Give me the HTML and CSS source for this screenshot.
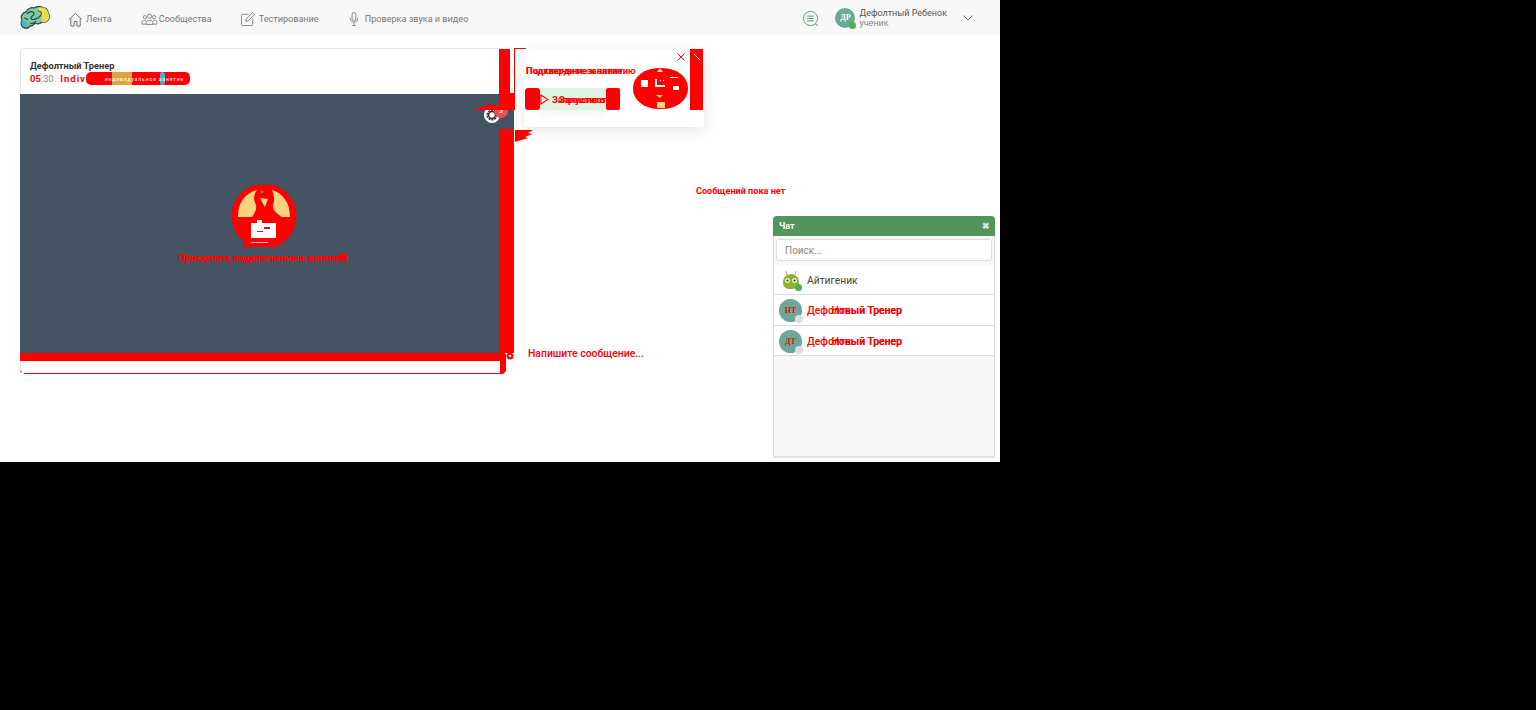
FILE: index.html
```html
<!DOCTYPE html>
<html lang="ru">
<head>
<meta charset="utf-8">
<title>Занятие</title>
<link rel="stylesheet" href="styles.css">
</head>
<body>
<div class="page">
  <header class="topbar">
    <svg class="logo" viewBox="0 0 30 23" width="30" height="23">
      <path d="M2 14C0 10 3 6 6 6c1-3 5-5 8-4 3-2 7-2 9 0 3 0 5 2 5 5 2 2 2 5 0 7-1 2-4 3-6 2-2 2-5 2-7 1-1 2-3 3-5 3l-2 2H5C2 22 0 18 2 14z" fill="#7fc9a0" stroke="#2f4a4e" stroke-width="1.300"/>
      <path d="M18 2c2-1 4-1 5 0 3 0 5 2 5 5 2 2 2 5 0 7-1 2-4 3-6 2-1-2-1-4 0-5-2-2-3-6-4-9z" fill="#eadb4e"/>
      <path d="M2 14c3 1 6 2 7 4-1 2-2 3-3 3H5C2 21 1 17 2 14z" fill="#4db5c6"/>
      <path d="M7 8c2-3 6-3 7-1s-3 3-3 5 4 2 6 0M18 5c3 0 4 2 3 4s-3 2-3 4M10 17c2 1 5 0 6-2M4 12c2 0 3 1 4 2" fill="none" stroke="#2f4a4e" stroke-width="1.200"/>
    </svg>
    <nav class="nav">
      <a class="nav-item nav-home">
        <svg viewBox="0 0 16 16" width="15" height="15"><path d="M1 8l7-6.500L15 8M3 7v8h3.500v-5h3v5H13V7" fill="none" stroke="#666" stroke-width="1"/></svg>
        Лента
      </a>
      <a class="nav-item nav-groups">
        <svg viewBox="0 0 18 14" width="17" height="13"><g fill="none" stroke="#777" stroke-width=".9"><circle cx="9" cy="3.500" r="2.200"/><circle cx="4" cy="4.500" r="1.800"/><circle cx="14" cy="4.500" r="1.800"/><path d="M5.500 12.500V9.500c0-2 7-2 7 0v3zM1 12V9.500c0-1.500 2-2 4-1.500M17 12V9.500c0-1.500-2-2-4-1.500M1 12h4.500M17 12h-4.500"/></g></svg>
        Сообщества
      </a>
      <a class="nav-item nav-test">
        <svg viewBox="0 0 15 15" width="14" height="14"><path d="M8 2.500H1.500a1 1 0 0 0-1 1v10a1 1 0 0 0 1 1h10a1 1 0 0 0 1-1V7M5 10l.5-2.500L12.500.8l2 2-7 6.700z" fill="none" stroke="#777" stroke-width=".9"/></svg>
        Тестирование
      </a>
      <a class="nav-item nav-mic">
        <svg viewBox="0 0 10 15" width="10" height="14"><g fill="none" stroke="#777" stroke-width=".9"><rect x="3" y=".5" width="4" height="9" rx="2"/><path d="M1 6.500c0 6 8 6 8 0M5 11.500v2.500M3 14.500h4"/></g></svg>
        Проверка звука и видео
      </a>
    </nav>
    <div class="top-right">
      <svg class="chat-icon" viewBox="0 0 18 18" width="17" height="17"><circle cx="9" cy="9" r="7.500" fill="none" stroke="#4f9a6a" stroke-width="1"/><path d="M5.500 6.500h7M5.500 9h7M5.500 11.500h7" stroke="#4f9a6a" stroke-width="1"/><path d="M14 15l3 1.500" stroke="#4f9a6a" stroke-width="1"/></svg>
      <div class="user-avatar">ДР<span class="online"></span></div>
      <div class="user-info">
        <div class="user-name">Дефолтный Ребенок</div>
        <div class="user-role">ученик</div>
      </div>
      <svg class="caret" viewBox="0 0 10 6" width="10" height="6"><path d="M.5.500L5 5 9.500.500" fill="none" stroke="#666" stroke-width=".9"/></svg>
    </div>
  </header>

  <main class="stage">
    <section class="lesson">
      <div class="lesson-head">
        <div class="trainer">Дефолтный Тренер</div>
        <div class="meta">
          <span class="red-strong">05</span><span class="grey">:30 ·</span>
          <span class="red-strong gap">Indiv</span>
          <span class="pill">
            <span class="pill-orange"></span><span class="pill-blue"></span>
            <span class="pill-text">индивидуальное занятие</span>
          </span>
        </div>
      </div>
      <div class="video">
        <svg class="person" viewBox="0 0 66 62" width="66" height="62">
          <circle cx="33" cy="31" r="32.500" fill="#f00"/>
          <rect x="12" y="50" width="34" height="12" fill="#f00"/>
          <path d="M7 31C7 18 14 8 26 5c-3 4-4 9-1 15 1 5-2 9-4 12H7zM59 32C59 18 52 8 41 5c2 5 3 10 1 15-1 5 4 9 9 12z" fill="#fbd27f"/>
          <path d="M29 13l8 1-3 8-2-3z" fill="#fbd27f"/>
          <circle cx="31" cy="7" r="1.200" fill="#8a8a8a"/>
          <rect x="20" y="38" width="25" height="15" fill="#fff"/>
          <rect x="26" y="35" width="5" height="3" fill="#fff"/>
          <rect x="33" y="42" width="6" height="2" fill="#f00"/>
          <rect x="26" y="46" width="6" height="1" fill="#f00"/>
          <rect x="20" y="57" width="17" height="1" fill="#f9c8b0"/>
        </svg>
        <div class="video-caption">
          <span>Дождитесь подключения к занятию</span>
          <span>Пригласите подключиться к занятию</span>
        </div>
        <div class="gear-wrap">
          <svg viewBox="0 0 16 16" width="16" height="16"><circle cx="8" cy="8" r="8" fill="#fff"/><circle cx="8" cy="8" r="4.800" fill="none" stroke="#333" stroke-width="1.600" stroke-dasharray="2 1"/><circle cx="8" cy="8" r="3.400" fill="none" stroke="#333" stroke-width="1.500"/></svg>
          <span class="badge">3</span>
        </div>
      </div>
      <div class="lesson-foot"></div>
    </section>

    <section class="popup">
      <div class="popup-title"><span>Подключение к занятию</span><span>Подтвердите занятие</span></div>
      <div class="popup-row">
        <button class="start">
          <svg viewBox="0 0 10 12" width="9" height="11"><path d="M1 1l8 5-8 5z" fill="none" stroke="#f00" stroke-width="1.200"/></svg>
          <span class="start-label"><span>Запустить</span><span>Запрашивать</span></span>
        </button>
      </div>
      <svg class="popup-face" viewBox="0 0 55 41" width="55" height="41">
        <rect width="55" height="41" rx="26" ry="20" fill="#f00"/>
        <rect x="8" y="12" width="7" height="7" fill="#fff"/>
        <rect x="22" y="11" width="2" height="8" fill="#fff"/><rect x="22" y="17" width="10" height="2" fill="#fff"/>
        <rect x="27" y="12" width="1" height="1" fill="#fff"/><rect x="30" y="12" width="1" height="1" fill="#fff"/>
        <rect x="40" y="18" width="6" height="4" fill="#fff"/>
        <rect x="37" y="9" width="8" height="1" fill="#fff"/>
        <path d="M24 4l3-4 3 4z" fill="#f7dc9f"/>
        <path d="M23 27h7l-3 3zM24 34h8v6h-8z" fill="#f7d078"/>
      </svg>
      <svg class="popup-close" viewBox="0 0 9 9" width="8" height="8"><path d="M.5.500l8 8M8.500.500l-8 8" stroke="#f00" stroke-width="1.100"/></svg>
    </section>

    <div class="empty">Сообщений пока нет</div>
    <div class="write">Напишите сообщение...</div>

    <aside class="chat">
      <div class="chat-head"><span>Чат</span><span class="chat-x">✖</span></div>
      <div class="chat-search"><input class="search" placeholder="Поиск..."></div>
      <ul class="contacts">
        <li class="contact">
          <svg class="bot" viewBox="0 0 24 24" width="24" height="24"><path d="M7 3l1 4M17 3l-1 4" stroke="#e79fb0" stroke-width="1"/><path d="M4 14c0-5 4-8 8-8s8 3 8 8c0 6-3 7-8 7s-8-1-8-7z" fill="#8cb62c"/><circle cx="8.500" cy="12.500" r="2.500" fill="#e8eed0"/><circle cx="15.500" cy="12.500" r="2.500" fill="#e8eed0"/><circle cx="8.500" cy="12.500" r="1" fill="#333"/><circle cx="15.500" cy="12.500" r="1" fill="#333"/><circle cx="19.500" cy="19.500" r="3.500" fill="#4caf50"/></svg>
          <span class="contact-name">Айтигеник</span>
        </li>
        <li class="contact">
          <div class="c-avatar"><span class="c-init">НТ</span><span class="offline"></span></div>
          <div class="contact-red"><span>Дефолтный Тренер</span><span>Новый Тренер</span></div>
        </li>
        <li class="contact">
          <div class="c-avatar"><span class="c-init">ДТ</span><span class="offline"></span></div>
          <div class="contact-red"><span>Дефолтный Тренер</span><span>Новый Тренер</span></div>
        </li>
      </ul>
    </aside>

    <svg class="artefacts" viewBox="0 0 1000 462" width="1000" height="462">
      <g fill="#f00">
        <path d="M499 49h11v44h5v17h-16z"/>
        <path d="M514 48h12v1h-12z"/><path d="M514 48h1v46h-1z"/>
        <path d="M473 110l8-3 10-3 6 2 3-2v6z"/>
        <path d="M499 129h15v224h-15z"/>
        <path d="M515 130h18l-5 3 4 1-7 3 3 1-13 4z"/>
        <path d="M20 353h485v8H20z"/>
        <path d="M500 354h6v17l-3 3h-3z"/>
        <path d="M24 373h478v1H24z"/>
        <path d="M20 370l2 2-1 1z"/>
        <rect x="525" y="88" width="15" height="22" rx="3"/>
        <rect x="606" y="88" width="14" height="22" rx="2"/>
        <path d="M690 49h13v61h-13z"/>
        <circle cx="343" cy="257" r="4"/>
        <circle cx="510" cy="356" r="3.500"/>
      </g>
      <path d="M694 54l6 6" stroke="#fff" stroke-width="1"/>
      <circle cx="510" cy="356" r="1.300" fill="#fff"/>
    </svg>
  </main>
</div>
</body>
</html>
```
FILE: styles.css
```css
* { box-sizing: border-box; }
html, body { margin: 0; padding: 0; height: 100%; background: #000; overflow: hidden; }
body { font-family: Roboto, "Noto Sans", sans-serif; font-size: 10px; color: #444; }

.page { width: 1000px; height: 462px; background: #fff; overflow: hidden; display: flex; flex-direction: column; }

.topbar { height: 35px; background: #f8f8f8; display: flex; align-items: center; padding: 0 27px 0 20px; flex: none; }
.logo { flex: none; }
.nav { display: flex; align-items: center; margin-left: 18px; padding-top: 3px; }
.nav-item { display: flex; align-items: center; color: #777; font-size: 9.100px; white-space: nowrap; }
.nav-item svg { flex: none; }
.nav-home svg { margin-right: 3px; }
.nav-groups { margin-left: 29px; }
.nav-groups svg { margin-right: 1px; }
.nav-test { margin-left: 29px; }
.nav-test svg { margin-right: 4px; }
.nav-mic { margin-left: 30px; }
.nav-mic svg { margin-right: 6px; }

.top-right { margin-left: auto; display: flex; align-items: center; padding-top: 1px; }
.user-avatar { position: relative; width: 20px; height: 20px; border-radius: 50%; background: #6ba79a; color: #fff; font: bold 8px/20px "Liberation Serif", serif; text-align: center; margin-left: 16px; }
.online { position: absolute; right: -1px; bottom: -1px; width: 7px; height: 7px; border-radius: 50%; background: #4caf50; }
.user-info { margin-left: 4px; line-height: 10px; }
.user-name { color: #555; font-size: 9px; }
.user-role { color: #888; font-size: 9px; }
.caret { margin-left: 16px; }

.stage { position: relative; flex: 1; margin-top: 1px; }

.lesson { position: absolute; left: 20px; top: 12px; width: 485px; height: 326px; background: #fff; border: 1px solid #e6e6e6; border-radius: 4px; display: flex; flex-direction: column; }
.lesson-head { height: 45px; padding: 11px 9px 0; flex: none; }
.trainer { font-weight: 700; font-size: 9.200px; line-height: 12px; color: #333; }
.meta { display: flex; align-items: center; height: 13px; font-size: 9.400px; }
.red-strong { color: #f00; font-weight: 700; }
.grey { color: #888; }
.gap { margin-left: 2px; letter-spacing: 1px; }
.pill { position: absolute; left: 65px; top: 23px; width: 104px; height: 13px; border-radius: 5px; background: #f00; display: flex; align-items: center; justify-content: flex-end; padding-right: 6px; }
.pill-orange { position: absolute; left: 26px; top: 0; width: 20px; height: 13px; background: #dca53f; }
.pill-blue { position: absolute; left: 74px; top: 0; width: 5px; height: 13px; border-radius: 3px; background: #4fa9c9; }
.pill-text { position: relative; color: #fff; font-size: 5px; letter-spacing: .9px; white-space: nowrap; }

.video { position: absolute; left: -1px; top: 45px; width: 494px; height: 259px; background: #445261; display: flex; flex-direction: column; align-items: center; padding-top: 91px; }
.person { margin-left: -6px; flex: none; }
.video-caption { display: grid; margin: 4px 0 0 -8px; color: #f00; font-size: 9.600px; font-weight: 500; line-height: 14px; }
.video-caption span { grid-area: 1 / 1; white-space: nowrap; text-align: center; }
.gear-wrap { position: absolute; left: 464px; top: 13px; width: 28px; height: 18px; }
.badge { position: absolute; left: 10px; top: -3px; width: 14px; height: 14px; border-radius: 50%; background: #ef4b50; color: #fff; font-size: 8px; line-height: 14px; text-align: center; }

.popup { position: absolute; left: 524px; top: 13px; width: 180px; height: 78px; background: #fff; box-shadow: 0 4px 14px rgba(0,0,0,.1); }
.popup-title { position: absolute; left: 2px; top: 15px; display: grid; color: #f00; font-weight: 700; font-size: 9.400px; line-height: 14px; white-space: nowrap; }
.popup-title span { grid-area: 1 / 1; }
.popup-row { position: absolute; left: 16px; top: 39px; }
.start { display: flex; align-items: center; width: 66px; height: 22px; padding: 0; border: 0; background: #e0f3e1; color: #f00; font: 700 9.400px Roboto, sans-serif; box-shadow: 0 4px 10px rgba(0,0,0,.05); }
.start svg { margin: 0 3px 0 0; flex: none; }
.start-label { display: grid; }
.start-label span { grid-area: 1 / 1; white-space: nowrap; }
.popup-face { position: absolute; left: 109px; top: 19px; }
.popup-close { position: absolute; left: 153px; top: 4px; }

.empty { position: absolute; left: 696px; top: 149px; font-weight: 700; font-size: 9.100px; line-height: 12px; color: #f00; white-space: nowrap; }
.write { position: absolute; left: 528px; top: 311px; font-weight: 500; font-size: 10.400px; line-height: 14px; color: #f00; white-space: nowrap; }

.chat { position: absolute; left: 773px; top: 180px; width: 222px; height: 241px; background: #f8f8f8; border: 1px solid #ddd; border-top: 0; border-radius: 4px 4px 2px 2px; box-shadow: 0 1px 2px rgba(0,0,0,.1); }
.chat-head { height: 20px; margin: 0 -1px; padding: 0 6px; background: #52965e; color: #fff; font-size: 9px; font-weight: 700; display: flex; align-items: center; justify-content: space-between; border-radius: 4px 4px 0 0; }
.chat-x { color: #d9e8dc; font-size: 9px; margin-right: -1px; }
.chat-search { padding: 3px 2px 3.500px 2px; }
.search { display: block; width: 216px; height: 22px; padding: 0 8px; border: 1px solid #ddd; border-radius: 3px; background: #fff; font: 10px Roboto, sans-serif; color: #444; outline: 0; }
.search::placeholder { color: #888; }
.contacts { list-style: none; margin: 0; padding: 0; }
.contact { height: 30.500px; background: #fff; border-bottom: 1px solid #ddd; display: flex; align-items: center; padding: 1.500px 0 0 5px; }
.bot { flex: none; }
.contact-name { margin-left: 4px; font-size: 10.300px; color: #444; }
.c-avatar { position: relative; flex: none; width: 23px; height: 23px; border-radius: 50%; background: #6ba79a; text-align: center; }
.c-init { color: #f00; font: bold 8px/23px "Liberation Serif", serif; }
.offline { position: absolute; right: -1px; bottom: -1px; width: 8px; height: 8px; border-radius: 50%; background: #ddd; }
.contact-red { display: grid; margin-left: 5px; color: #f00; font-size: 10.400px; font-weight: 500; }
.contact-red span { grid-area: 1 / 1; white-space: nowrap; }
.contact-red span:last-child { justify-self: end; }

.artefacts { position: absolute; left: 0; top: -36px; pointer-events: none; }
```
